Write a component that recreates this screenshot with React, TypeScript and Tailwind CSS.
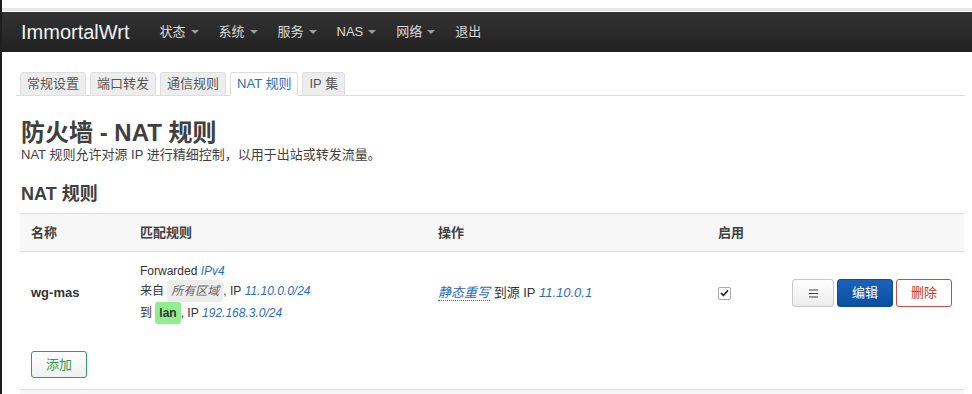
const menu = ["状态", "系统", "服务", "NAS", "网络"];
const tabs = ["常规设置", "端口转发", "通信规则", "NAT 规则", "IP 集"];

const Caret = () => (
  <span className="ml-[5px] inline-block h-0 w-0 border-x-[4px] border-t-[4px] border-x-transparent border-t-[#9a9a9a] align-middle" />
);

const Navbar = () => {
  return (
    <nav className="flex h-10 items-center bg-gradient-to-b from-[#343434] to-[#212121] pl-[19px]">
      <span className="text-[20px] leading-none text-[#f2f2f2]">ImmortalWrt</span>
      <ul className="ml-[20px] flex items-center">
        {menu.map((m) => (
          <li key={m} className="flex items-center px-[10px] text-[13px] text-[#dadada]">
            {m}
            <Caret />
          </li>
        ))}
        <li className="px-[10px] text-[13px] text-[#dadada]">退出</li>
      </ul>
    </nav>
  );
};

const Tabs = () => {
  return (
    <ul className="flex gap-[4px] border-b border-[#dcdcdc] pl-[4px]">
      {tabs.map((t) => {
        const active = t === "NAT 规则";
        return (
          <li
            key={t}
            className={`-mb-px rounded-t-[3px] border px-[6px] text-[13px] leading-[22px] ${
              active ? "border-[#dcdcdc] border-b-white bg-white text-[#2a6cbf]" : "border-[#dedede] bg-[#ededed] text-[#555]"
            }`}
          >
            {t}
          </li>
        );
      })}
    </ul>
  );
};

const Value = ({ children }: { children: React.ReactNode }) => (
  <em className="text-[#2a6cbf]">{children}</em>
);

const RuleRow = () => {
  return (
    <div className="grid grid-cols-[110px_298px_280px_74px_1fr] items-center">
      <div className="pl-[11px] text-[13px] font-bold text-[#333]">wg-mas</div>

      <div className="flex flex-col py-[10px] pl-[10px] text-[12px] text-[#333]">
        <span className="leading-[18px]">
          Forwarded <Value>IPv4</Value>
        </span>
        <span className="flex items-center leading-[22px]">
          来自&nbsp;
          <em className="rounded-[3px] bg-[#ececec] px-[4px] text-[#666]">所有区域</em>
          , IP&nbsp;<Value>11.10.0.0/24</Value>
        </span>
        <span className="flex items-center leading-[22px]">
          到&nbsp;
          <span className="rounded-[3px] bg-[#90ee90] px-[4px] font-bold text-[#333]">lan</span>
          , IP&nbsp;<Value>192.168.3.0/24</Value>
        </span>
      </div>

      <div className="pl-[10px] text-[13px] text-[#333]">
        <em className="border-b border-dotted border-[#2a6cbf] text-[#2a6cbf]">静态重写</em> 到源 IP <Value>11.10.0.1</Value>
      </div>

      <div className="pl-[10px]">
        <span className="flex h-[13px] w-[13px] items-center justify-center rounded-[2px] border border-[#a8a8a8] bg-white">
          <svg width="9" height="8" viewBox="0 0 9 8">
            <path d="M1 4.2 L3.4 6.4 L8 1.4" fill="none" stroke="#222" strokeWidth="1.6" />
          </svg>
        </span>
      </div>

      <div className="flex items-center gap-[3px] pl-[10px]">
        <button className="flex h-[28px] w-[42px] items-center justify-center rounded-[3px] border border-[#c8c8c8] bg-gradient-to-b from-white to-[#ececec]">
          <svg width="9" height="9" viewBox="0 0 9 9">
            <path d="M0 1h9M0 4.5h9M0 8h9" stroke="#444" strokeWidth="1" />
          </svg>
        </button>
        <button className="h-[28px] w-[56px] rounded-[3px] border border-[#0c4c9c] bg-gradient-to-b from-[#1c62bb] to-[#0b4fa2] text-[13px] text-white">
          编辑
        </button>
        <button className="h-[28px] w-[56px] rounded-[3px] border border-[#d04a3a] bg-white text-[13px] text-[#d8322a]">
          删除
        </button>
      </div>
    </div>
  );
};

export default function App() {
  return (
    <div className="min-h-screen border-l-2 border-[#1e1e1e] bg-white font-['Liberation_Sans','Noto_Sans_CJK_SC',sans-serif] text-[#333]">
      <div className="h-[8px] bg-white" />
      <div className="h-[3px] bg-[#e6e6e6]" />
      <div className="h-px bg-white" />
      <Navbar />

      <main className="pl-[14px] pr-[7px] pt-[20px]">
        <Tabs />

        <div className="pl-[5px]">
          <h2 className="mt-[24px] text-[24px] font-bold leading-[26px] text-[#404040]">防火墙 - NAT 规则</h2>
          <p className="text-[13px] leading-[18px] text-[#404040]">NAT 规则允许对源 IP 进行精细控制，以用于出站或转发流量。</p>
          <h3 className="mt-[18px] text-[18px] font-bold leading-[24px] text-[#404040]">NAT 规则</h3>
        </div>

        <section className="ml-[4px] mr-px mt-[7px]">
          <div className="grid h-[39px] grid-cols-[110px_298px_280px_74px_1fr] items-center border-y border-[#dedede] bg-[#f7f7f7] text-[13px] font-bold text-[#404040]">
            <div className="pl-[11px]">名称</div>
            <div className="pl-[10px]">匹配规则</div>
            <div className="pl-[10px]">操作</div>
            <div className="pl-[10px]">启用</div>
            <div />
          </div>

          <RuleRow />

          <div className="pb-[11px] pl-[11px] pt-[17px]">
            <button className="h-[27px] w-[56px] rounded-[3px] border border-[#2e9b62] bg-gradient-to-b from-white to-[#f0f0f0] text-[13px] text-[#2e9b4a]">
              添加
            </button>
          </div>

          <div className="h-[6px] border-t border-[#dedede] bg-[#f7f7f7]" />
        </section>
      </main>
    </div>
  );
}
